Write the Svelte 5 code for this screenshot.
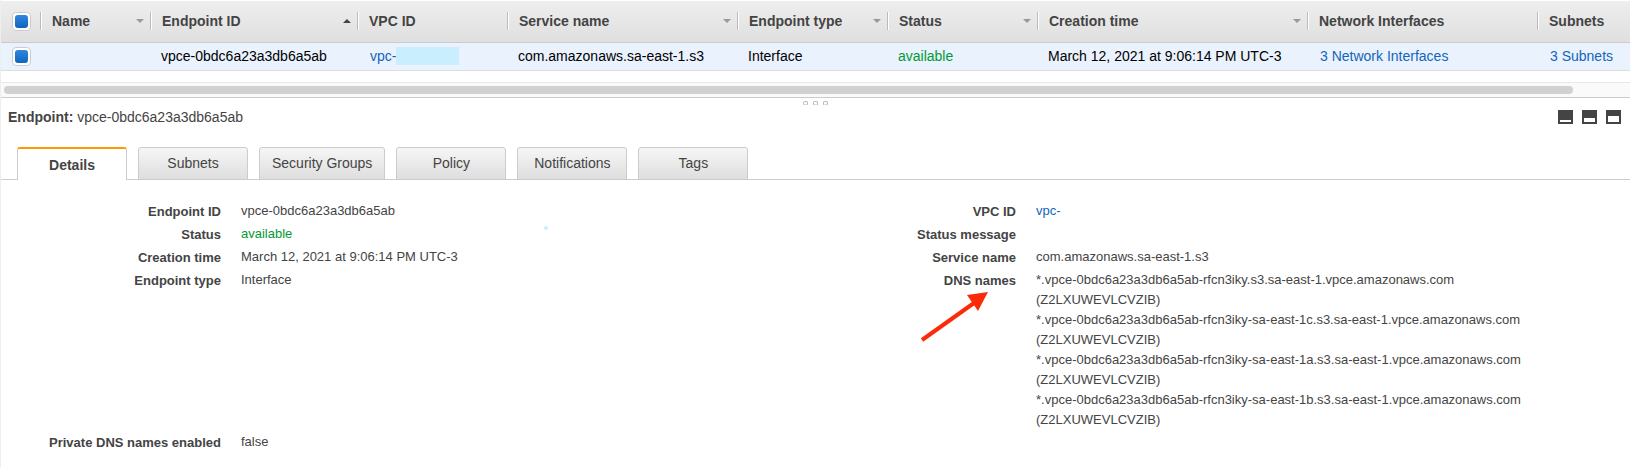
<script>
	const columns = [
		{ key: 'name', label: 'Name', size: 'small', sort: 'none' },
		{ key: 'id', label: 'Endpoint ID', size: 'id', sort: 'asc' },
		{ key: 'vpc', label: 'VPC ID', size: 'medium' },
		{ key: 'service', label: 'Service name', size: 'large', sort: 'none' },
		{ key: 'type', label: 'Endpoint type', size: 'medium', sort: 'none' },
		{ key: 'status', label: 'Status', size: 'medium', sort: 'none' },
		{ key: 'created', label: 'Creation time', size: 'time', sort: 'none' },
		{ key: 'interfaces', label: 'Network Interfaces', size: 'large' },
		{ key: 'subnets', label: 'Subnets', size: 'rest' }
	]

	const endpoint = {
		id: 'vpce-0bdc6a23a3db6a5ab',
		vpc: 'vpc-',
		service: 'com.amazonaws.sa-east-1.s3',
		type: 'Interface',
		status: 'available',
		created: 'March 12, 2021 at 9:06:14 PM UTC-3',
		interfaces: '3 Network Interfaces',
		subnets: '3 Subnets'
	}

	const dnsNames = [
		'*.vpce-0bdc6a23a3db6a5ab-rfcn3iky.s3.sa-east-1.vpce.amazonaws.com',
		'*.vpce-0bdc6a23a3db6a5ab-rfcn3iky-sa-east-1c.s3.sa-east-1.vpce.amazonaws.com',
		'*.vpce-0bdc6a23a3db6a5ab-rfcn3iky-sa-east-1a.s3.sa-east-1.vpce.amazonaws.com',
		'*.vpce-0bdc6a23a3db6a5ab-rfcn3iky-sa-east-1b.s3.sa-east-1.vpce.amazonaws.com'
	]
	const hostedZone = '(Z2LXUWEVLCVZIB)'

	// Listed left, right, left, right
	const details = [
		{ label: 'Endpoint ID', value: endpoint.id },
		{ label: 'VPC ID', value: endpoint.vpc, kind: 'link' },
		{ label: 'Status', value: endpoint.status, kind: 'status' },
		{ label: 'Status message', value: '' },
		{ label: 'Creation time', value: endpoint.created },
		{ label: 'Service name', value: endpoint.service },
		{ label: 'Endpoint type', value: endpoint.type },
		{ label: 'DNS names', kind: 'dns' },
		{ label: 'Private DNS names enabled', value: 'false' }
	]

	const tabs = ['Details', 'Subnets', 'Security Groups', 'Policy', 'Notifications', 'Tags']
	const paneSizes = [
		{ label: 'Minimize pane', y: 10, height: 2 },
		{ label: 'Split pane', y: 8, height: 4 },
		{ label: 'Maximize pane', y: 6, height: 6 }
	]

	let activeTab = $state('Details')
	let selected = $state(true)
</script>

<div class="console">
	<table class="endpoints">
		<colgroup>
			<col class="check" />
			{#each columns as column}
				<col class={column.size} />
			{/each}
		</colgroup>
		<thead>
			<tr>
				<th class="check-cell">
					<input type="checkbox" aria-label="Select all endpoints" bind:checked={selected} />
				</th>
				{#each columns as column}
					<th>
						<div class="heading">
							<span>{column.label}</span>
							{#if column.sort}
								<button type="button" class="sort" aria-label="Sort by {column.label}">
									<svg class:asc={column.sort === 'asc'} width="8" height="4" viewBox="0 0 8 4">
										<path d={column.sort === 'asc' ? 'M0 4L4 0L8 4Z' : 'M0 0H8L4 4Z'} />
									</svg>
								</button>
							{/if}
						</div>
					</th>
				{/each}
			</tr>
		</thead>
		<tbody>
			<tr>
				<td class="check-cell">
					<input type="checkbox" aria-label="Select {endpoint.id}" bind:checked={selected} />
				</td>
				<td></td>
				<td>{endpoint.id}</td>
				<td>
					<div class="vpc"><a href="#vpc">{endpoint.vpc}</a><span class="mask"></span></div>
				</td>
				<td>{endpoint.service}</td>
				<td>{endpoint.type}</td>
				<td class="available">{endpoint.status}</td>
				<td>{endpoint.created}</td>
				<td><a href="#interfaces">{endpoint.interfaces}</a></td>
				<td><a href="#subnets">{endpoint.subnets}</a></td>
			</tr>
		</tbody>
	</table>

	<div class="scroll-track"><div class="scroll-thumb"></div></div>

	<div class="grip">
		<span></span><span></span><span></span>
	</div>

	<header class="pane-header">
		<p><strong>Endpoint:</strong> {endpoint.id}</p>
		<div class="pane-sizes">
			{#each paneSizes as pane}
				<button type="button" aria-label={pane.label}>
					<svg width="15" height="14" viewBox="0 0 15 14">
						<rect width="15" height="14" fill="#444" />
						<rect x="2" y={pane.y} width="11" height={pane.height} fill="#fff" />
					</svg>
				</button>
			{/each}
		</div>
	</header>

	<nav class="tabs" role="tablist">
		{#each tabs as tab}
			<button
				type="button"
				role="tab"
				aria-selected={activeTab === tab}
				class:active={activeTab === tab}
				onclick={() => activeTab = tab}
			>{tab}</button>
		{/each}
	</nav>

	<dl class="details">
		{#each details as item}
			<div class="detail">
				<dt>
					{item.label}
					{#if item.kind === 'dns'}
						<svg class="arrow" width="70" height="52" viewBox="0 0 70 52">
							<path d="M2 50L54 13" stroke="#fb2b0a" stroke-width="4" />
							<path d="M68 2L47 5L58 21Z" fill="#fb2b0a" />
						</svg>
					{/if}
				</dt>
				<dd>
					{#if item.kind === 'link'}
						<a href="#vpc">{item.value}</a>
					{:else if item.kind === 'status'}
						<span class="available">{item.value}</span>
						<span class="dot"></span>
					{:else if item.kind === 'dns'}
						{#each dnsNames as name}
							<div>{name}</div>
							<div>{hostedZone}</div>
						{/each}
					{:else}
						{item.value}
					{/if}
				</dd>
			</div>
		{/each}
	</dl>
</div>

<style>
	:global(body) {
		background: #fff;
	}

	.console {
		border-left: 1px solid #eee;
		padding-top: 1px;
		overflow: hidden;
		color: #444;
		font-family: "Helvetica Neue", Helvetica, "Liberation Sans", Arial, sans-serif;
		font-size: 13px;
		line-height: 20px;
	}

	a {
		color: #1166bb;
		text-decoration: none;
	}

	a:hover {
		text-decoration: underline;
	}

	button {
		font-family: inherit;
		color: inherit;
		cursor: pointer;
	}

	.available {
		color: #009933;
	}

	.endpoints {
		width: 100%;
		table-layout: fixed;
		border-collapse: separate;
		border-spacing: 0;
		font-size: 14px;
		white-space: nowrap;
	}

	.check {
		width: 39px;
	}

	.small {
		width: 110px;
	}

	.id {
		width: 207px;
	}

	.medium {
		width: 150px;
	}

	.large {
		width: 230px;
	}

	.time {
		width: 270px;
	}

	thead tr {
		background: linear-gradient(#eee, #dfdfdf);
	}

	th {
		height: 39px;
		padding: 0 0 2px;
		border-bottom: 1px solid #ccc;
		text-align: left;
	}

	.heading {
		display: flex;
		align-items: center;
		justify-content: space-between;
		height: 18px;
		padding: 0 6px 0 11px;
		border-left: 1px solid #bbb;
		box-shadow: inset 1px 0 #fff;
	}

	.sort {
		display: flex;
		padding: 0;
		border: none;
		background: none;
	}

	.sort svg {
		fill: #999;
	}

	.sort svg.asc {
		fill: #444;
	}

	td {
		height: 25px;
		padding: 0 0 2px 11px;
		border-bottom: 1px solid #ddd;
		background: #eaf2fe;
		color: #000;
	}

	td a {
		margin-left: 2px;
	}

	td.available {
		color: #009933;
	}

	.check-cell {
		padding: 0 0 0 11px;
	}

	input[type="checkbox"] {
		appearance: none;
		display: block;
		box-sizing: border-box;
		width: 19px;
		height: 19px;
		margin: 0;
		padding: 2px;
		border: 1px solid #ccc;
		border-radius: 4px;
		background: #fff;
	}

	input[type="checkbox"]::before {
		content: "";
		display: block;
		height: 13px;
		border-radius: 3px;
	}

	input[type="checkbox"]:checked::before {
		background: linear-gradient(#2f86dd, #1166bb);
	}

	.vpc {
		display: flex;
		align-items: center;
	}

	.mask {
		width: 63px;
		height: 18px;
		background: #c9eefe;
	}

	.scroll-track {
		margin-top: 11px;
		padding: 3px 57px 3px 3px;
		border-top: 1px solid #e8e8e8;
		border-bottom: 1px solid #ccc;
		background: #fafafa;
	}

	.scroll-thumb {
		height: 8px;
		border-radius: 4px;
		background: #d1d1d1;
	}

	.grip {
		display: flex;
		justify-content: center;
		gap: 5px;
		padding-top: 3px;
	}

	.grip span {
		width: 3px;
		height: 2px;
		border: 1px solid #bbb;
		border-bottom-color: #ddd;
		border-radius: 2px 2px 0 0;
	}

	.pane-header {
		display: flex;
		align-items: center;
		justify-content: space-between;
		padding: 2px 9px 0 7px;
		font-size: 14px;
	}

	.pane-header p {
		margin: 0;
	}

	.pane-sizes {
		display: flex;
		gap: 9px;
	}

	.pane-sizes button {
		display: flex;
		padding: 0;
		border: none;
		background: none;
	}

	.tabs {
		display: flex;
		gap: 11px;
		margin-top: 20px;
		padding-left: 16px;
		box-shadow: inset 0 -1px #ccc;
	}

	.tabs button {
		box-sizing: border-box;
		min-width: 110px;
		height: 33px;
		padding: 0 12px 2px;
		border: 1px solid #ccc;
		border-radius: 3px 3px 0 0;
		background: linear-gradient(#f6f6f6, #dedede);
		font-size: 14px;
	}

	.tabs button.active {
		border-top: 2px solid #f90;
		border-bottom: none;
		padding-top: 2px;
		background: #fff;
		font-weight: bold;
	}

	.details {
		display: grid;
		grid-template-columns: 1fr 1fr;
		margin: 0;
		padding: 21px 20px 20px 19px;
	}

	.detail {
		position: relative;
		display: flex;
		gap: 20px;
		padding-bottom: 2px;
	}

	dt {
		position: relative;
		flex: none;
		width: 201px;
		padding-top: 1px;
		font-weight: bold;
		text-align: right;
	}

	dd {
		margin: 0;
	}

	/* Annotations drawn over the details */
	.arrow {
		position: absolute;
		top: 20px;
		right: 26px;
	}

	.dot {
		position: absolute;
		top: 2px;
		left: 524px;
		width: 4px;
		height: 4px;
		border-radius: 50%;
		background: #c9eefe;
	}
</style>
